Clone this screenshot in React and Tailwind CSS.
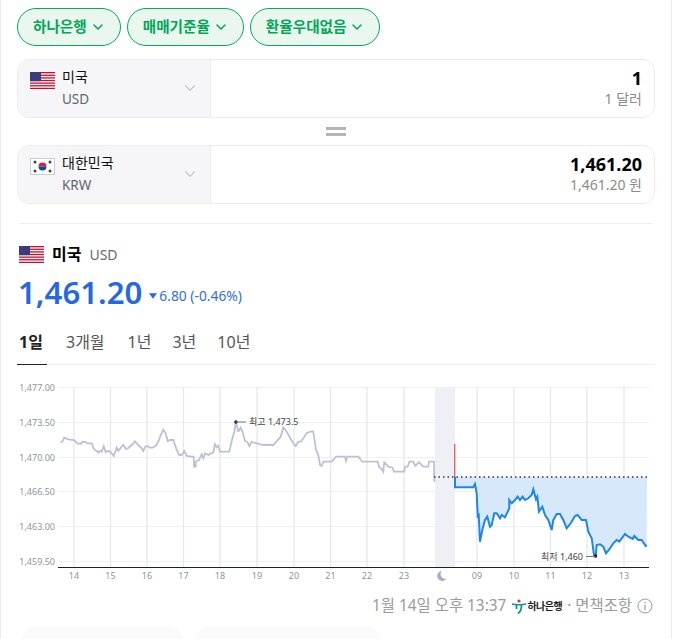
import React from 'react';
import { ChevronDown } from 'lucide-react';

const FONT = '"Noto Sans", "Noto Sans CJK KR", sans-serif';

// points read off the picture at 3x, [origin x, origin y, flat list]
const grayA = [0, 375, [182,203,188,198,193,188,205,193,222,195,232,205,243,207,247,200,257,201,262,205,275,205,282,222,285,225,290,228,295,233,300,227,305,230,311,214,317,232,322,228,330,229,335,235,341,243,346,230,350,218,355,228,362,218,370,209,378,222,385,219,395,210,405,199,415,210,425,220,430,228,436,215,442,213,450,218,458,218,468,212,475,200,483,178,490,164,497,175,503,198,510,195,520,195,530,225,538,240,545,240,553,228,560,243,575,245,581,245,582,275,587,275,587,260,597,255,605,238,610,250,615,235,625,240,640,232,645,208,650,217,655,212,660,230,675,230,688,230,695,197,703,170,708,142]];
const grayB = [230, 375, [25,170,32,158,38,172,45,198,52,200,58,213,65,201,80,205,100,210,130,210,152,185,160,157,170,170,190,205,197,213,205,200,213,200,230,175,240,170,250,170,258,225,265,240,270,270,275,273,280,260,305,260,318,245,345,245,348,258,352,245,385,245,397,260,443,260,447,275,455,282,460,290,463,262,475,275,487,278,492,290,523,290,525,275,533,275,538,260,550,260,556,273,567,262,580,275,595,275,597,260,612,260,613,320]];
const blue = [450, 440, [15,110,15,142,70,142,75,132,80,160,83,228,86,225,90,305,97,270,105,240,112,230,120,260,125,255,133,220,140,220,150,235,155,225,165,232,178,205,178,180,185,190,195,180,203,170,210,180,218,170,225,180,235,175,245,165,250,148,258,178,262,170,267,215,277,200,285,225,295,240,305,270,310,240,320,222,330,222,340,240,350,265,362,250,375,228,383,225,395,240,408,240,415,275,425,295,432,345,437,348,440,315,450,313,460,320,468,340,480,325,490,310,500,300,508,305,525,282,535,290,548,297,553,288,565,300,575,300,587,318,590,315]];

function toPoints([ox, oy, list]) {
  const out = [];
  for (let i = 0; i < list.length; i += 2) {
    out.push(`${(ox + list[i] / 3).toFixed(1)},${(oy + list[i + 1] / 3).toFixed(1)}`);
  }
  return out.join(' ');
}

function UsFlag() {
  const stripes = [0, 2, 4, 6, 8, 10, 12];
  return (
    <svg width="25" height="17" viewBox="0 0 25 17" className="shrink-0">
      <rect width="25" height="17" fill="#fff" />
      {stripes.map((s) => (
        <rect key={s} y={s * 1.31} width="25" height="1.31" fill="#c8102e" />
      ))}
      <rect width="11" height="9.2" fill="#3c3b7e" />
    </svg>
  );
}

function KrFlag() {
  return (
    <svg width="25" height="17" viewBox="0 0 25 17" className="shrink-0">
      <rect x="0.5" y="0.5" width="24" height="16" fill="#fff" stroke="#ccc" />
      <path d="M8.5 8.5a4 4 0 0 1 8 0z" fill="#d5213a" />
      <path d="M8.5 8.5a4 4 0 0 0 8 0z" fill="#0f4a9c" />
      <circle cx="5" cy="4" r="1.5" fill="#444" />
      <circle cx="20" cy="4" r="1.5" fill="#444" />
      <circle cx="5" cy="13" r="1.5" fill="#444" />
      <circle cx="20" cy="13" r="1.5" fill="#444" />
    </svg>
  );
}

function Chip({ label }) {
  return (
    <button className="flex h-[38px] items-center gap-[3px] rounded-full border border-[#00ad5f] bg-[#e9f7ef] pl-[15px] pr-[14px] text-[14.6px] font-semibold text-[#00a857]">
      {label}
      <ChevronDown className="h-4 w-4" strokeWidth={2.2} />
    </button>
  );
}

function CurrencyRow({ flag, name, code, value, sub }) {
  return (
    <div className="flex h-[59px] overflow-hidden rounded-xl border border-[#ececec]">
      <div className="relative flex w-[193px] shrink-0 border-r border-[#ececec] bg-[#f6f6f8] pl-[12px] pt-[8px]">
        <div className="mt-[4px]">{flag}</div>
        <div className="ml-[7px]">
          <div className="text-[14px] leading-[18px] text-[#111]">{name}</div>
          <div className="mt-[4px] text-[13.5px] leading-[18px] text-[#5f6470]">{code}</div>
        </div>
        <ChevronDown className="absolute left-[163px] top-[19px] h-[18px] w-[18px] text-[#c8c8c8]" strokeWidth={1.6} />
      </div>
      <div className="flex-1 pr-[12px] pt-[8px] text-right">
        <div className="text-[18px] font-bold leading-[21px] text-black">{value}</div>
        <div className="text-[14px] leading-[20px] text-[#8b8b8b]">{sub}</div>
      </div>
    </div>
  );
}

function Chart() {
  const yRows = [['1,477.00', 387.5], ['1,473.50', 422.5], ['1,470.00', 457.5], ['1,466.50', 491.5], ['1,463.00', 526.5], ['1,459.50', 561.5]];
  const xCols = [['14', 74], ['15', 110.5], ['16', 147], ['17', 183.5], ['18', 220], ['19', 257], ['20', 294], ['21', 330.5], ['22', 367], ['23', 404], ['09', 477], ['10', 514], ['11', 550.5], ['12', 587], ['13', 624]];
  const bluePts = toPoints(blue);
  return (
    <svg width="672" height="210" viewBox="0 375 672 210" className="-ml-px block">
      <rect x="435" y="387" width="20" height="180" fill="#eef0f6" />
      {yRows.map(([label, y]) => (
        <g key={label}>
          <line x1="58" x2="649" y1={y} y2={y} stroke="#eeeff2" />
          <text x="55" y={y + 3} textAnchor="end" fontSize="9" fill="#8e94a3">{label}</text>
        </g>
      ))}
      {xCols.map(([label, x]) => (
        <g key={label}>
          <line x1={x} x2={x} y1="387" y2="567" stroke="#e4e6ec" strokeWidth="1.2" />
          <text x={x} y="579" textAnchor="middle" fontSize="9" fill="#8e94a3">{label}</text>
        </g>
      ))}
      <path d="M442 571a5 5 0 1 0 4.5 7.5a4.5 4.5 0 0 1-4.5-7.5z" fill="#a9adc9" />
      <polygon points={`455,477 ${bluePts} 647,477`} fill="#d7e8fb" />
      <polyline points={toPoints(grayA)} fill="none" stroke="#bcc1d8" strokeWidth="1.8" />
      <polyline points={toPoints(grayB)} fill="none" stroke="#bcc1d8" strokeWidth="1.8" />
      <polyline points={`236,422.5 238.3,431.7`} fill="none" stroke="#bcc1d8" strokeWidth="1.8" />
      <line x1="434" x2="649" y1="477" y2="477" stroke="#333" strokeWidth="1.4" strokeDasharray="1.5 3" />
      <line x1="454.7" x2="454.7" y1="444" y2="477" stroke="#e8636b" strokeWidth="1.4" />
      <polyline points={bluePts} fill="none" stroke="#1a86ee" strokeWidth="2" />
      <line x1="58" x2="649" y1="567.5" y2="567.5" stroke="#222" />
      <circle cx="236" cy="422" r="1.8" fill="#222" />
      <line x1="236" x2="246" y1="422" y2="422" stroke="#777" />
      <text x="249" y="425" fontSize="9" fill="#444">최고 1,473.5</text>
      <circle cx="595.5" cy="556" r="1.8" fill="#222" />
      <line x1="586" x2="595" y1="556.5" y2="556.5" stroke="#777" />
      <text x="583" y="560" textAnchor="end" fontSize="9" fill="#444">최저 1,460</text>
    </svg>
  );
}

function HanaLogo() {
  return (
    <span className="mx-[5px] flex items-center">
      <svg width="16" height="15" viewBox="0 0 16 15">
        <circle cx="8" cy="2" r="1.6" fill="#e0323c" />
        <path d="M1 5c3 1 11 1 14 0" fill="none" stroke="#0a9a8a" strokeWidth="1.6" />
        <path d="M5.5 6v4M10.5 6c0 4-1 7-3.5 8.5" fill="none" stroke="#0a9a8a" strokeWidth="1.8" />
      </svg>
      <span className="text-[10px] font-bold tracking-[-0.5px] text-[#222]">하나은행</span>
    </span>
  );
}

export default function App() {
  return (
    <div className="h-[639px] w-[699px] overflow-hidden bg-white" style={{ fontFamily: FONT }}>
      <div className="h-[639px] w-[672px] border-x border-[#ececec] pt-[8px]">
        {/* filters */}
        <div className="flex gap-[6px] pl-[16px]">
          <Chip label="하나은행" />
          <Chip label="매매기준율" />
          <Chip label="환율우대없음" />
        </div>

        {/* converter */}
        <div className="ml-[16px] mr-[16px] mt-[13px]">
          <CurrencyRow flag={<UsFlag />} name="미국" code="USD" value="1" sub="1 달러" />
          <div className="flex h-[27px] flex-col items-center justify-center gap-[3px]">
            <div className="h-[3px] w-[20px] bg-[#b5b5b5]" />
            <div className="h-[3px] w-[20px] bg-[#b5b5b5]" />
          </div>
          <CurrencyRow flag={<KrFlag />} name="대한민국" code="KRW" value="1,461.20" sub="1,461.20 원" />
        </div>

        <div className="mx-[19px] mt-[19px] h-px bg-[#eeeeee]" />

        {/* rate */}
        <div className="ml-[18px] mt-[18px] flex items-center">
          <UsFlag />
          <span className="ml-[8px] text-[16px] font-bold text-black">미국</span>
          <span className="ml-[8px] text-[14px] text-[#666b75]">USD</span>
        </div>
        <div className="ml-[17px] mt-[4px] flex items-center">
          <span className="text-[31.2px] font-semibold leading-[44px] text-[#2468e4]">1,461.20</span>
          <span className="ml-[7px] mt-[8px] flex items-center text-[13.8px] text-[#2f6fe0]">
            <svg width="8" height="6" viewBox="0 0 9 6" className="mr-[2px]">
              <path d="M0 0h9L4.5 6z" fill="#2468e4" />
            </svg>
            6.80 (-0.46%)
          </span>
        </div>

        {/* tabs */}
        <div className="mx-[16px] mt-[8px] flex h-[43px] border-b border-[#eeeeee] text-[16px] leading-[24px] text-[#555]">
          <div className="-mb-px w-[30px] border-b border-[#222] pl-[2px] pt-[8px] font-bold text-[#222]">1일</div>
          <div className="ml-[19px] pt-[8px]">3개월</div>
          <div className="ml-[23px] pt-[8px]">1년</div>
          <div className="ml-[21px] pt-[8px]">3년</div>
          <div className="ml-[21px] pt-[8px]">10년</div>
        </div>

        <div className="mt-[10px]">
          <Chart />
        </div>

        {/* footer */}
        <div className="mr-[18px] mt-[10px] flex h-[22px] items-center justify-end text-[15.4px] text-[#9a9a9a]">
          1월 14일 오후 13:37
          <HanaLogo />
          · 면책조항
          <svg width="16" height="16" viewBox="0 0 16 16" className="ml-[5px]">
            <circle cx="8" cy="8" r="7" fill="none" stroke="#9a9a9a" />
            <path d="M8 7v5M8 4v1.5" stroke="#9a9a9a" strokeWidth="1.2" />
          </svg>
        </div>

        {/* cards cut off by the window */}
        <div className="ml-[20px] mt-[9px] flex gap-[12px]">
          <div className="h-[60px] w-[162px] rounded-2xl bg-[#fafafa]" />
          <div className="h-[60px] w-[186px] rounded-2xl bg-[#fafafa]" />
        </div>
      </div>
    </div>
  );
}
